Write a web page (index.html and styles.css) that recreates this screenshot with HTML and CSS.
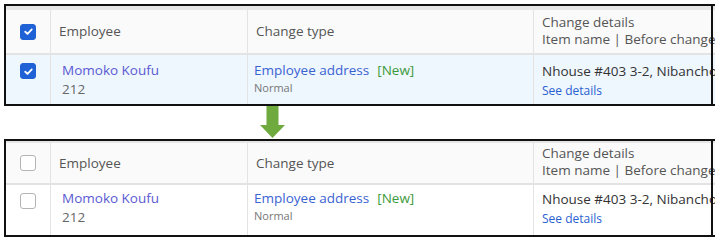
FILE: index.html
```html
<!DOCTYPE html>
<html>
<head>
<meta charset="utf-8">
<link rel="stylesheet" href="styles.css">
</head>
<body>
<div class="page">
  <div class="panel panel-top">
    <div class="grid">
      <div class="hcell ccb"><span class="cb checked"><svg viewBox="0 0 16 16" width="16" height="16"><path d="M4 8.3 L6.8 11 L12 5.4" fill="none" stroke="#fff" stroke-width="2.2" stroke-linecap="round" stroke-linejoin="round"/></svg></span></div>
      <div class="hcell">Employee</div>
      <div class="hcell">Change type</div>
      <div class="hcell two">Change details<br>Item name | Before change</div>
      <div class="sep"></div>
      <div class="rcell ccb sel"><span class="cb checked"><svg viewBox="0 0 16 16" width="16" height="16"><path d="M4 8.3 L6.8 11 L12 5.4" fill="none" stroke="#fff" stroke-width="2.2" stroke-linecap="round" stroke-linejoin="round"/></svg></span></div>
      <div class="rcell emp sel"><span class="name">Momoko Koufu</span><span class="num">212</span></div>
      <div class="rcell type sel"><span class="line"><span class="link">Employee address</span><span class="new">[New]</span></span><span class="small">Normal</span></div>
      <div class="rcell det sel"><span class="addr">Nhouse #403 3-2, Nibancho</span><span class="see">See details</span></div>
    </div>
  </div>
  <div class="arrow">
    <svg width="27" height="33" viewBox="0 0 27 33"><path d="M7.5 0 H19.5 V19 H26 L13.5 32 L1 19 H7.5 Z" fill="#6faa3f"/></svg>
  </div>
  <div class="panel panel-bottom">
    <div class="grid">
      <div class="hcell ccb"><span class="cb"></span></div>
      <div class="hcell">Employee</div>
      <div class="hcell">Change type</div>
      <div class="hcell two">Change details<br>Item name | Before change</div>
      <div class="sep"></div>
      <div class="rcell ccb"><span class="cb"></span></div>
      <div class="rcell emp"><span class="name">Momoko Koufu</span><span class="num">212</span></div>
      <div class="rcell type"><span class="line"><span class="link">Employee address</span><span class="new">[New]</span></span><span class="small">Normal</span></div>
      <div class="rcell det"><span class="addr">Nhouse #403 3-2, Nibancho</span><span class="see">See details</span></div>
    </div>
  </div>
</div>
</body>
</html>
```

FILE: styles.css
```css
* { box-sizing: border-box; }
html, body { margin: 0; padding: 0; background: #fff; }
body { font-family: "Open Sans", Lato, sans-serif; font-size: 13.5px; color: #555; }
.page { padding: 4px 0 0 4px; width: 715px; }
.panel {
  position: relative;
  border: 2px solid #111;
  border-right: none;
  width: 711px;
  overflow: hidden;
}
.panel::after {
  content: "";
  position: absolute;
  top: 0; bottom: 0;
  left: 705px;
  width: 2px;
  background: #111;
}
.grid {
  display: grid;
  grid-template-columns: 45px 197px 286px 1fr;
  white-space: nowrap;
}
.panel-top .grid { border-top: 4px solid #e6e6e6; }
.panel-bottom .grid { border-top: 2px solid #e6e6e6; }
.hcell {
  background: #fafafa;
  border-right: 1px solid #e3e3e3;
  padding: 0 8px;
  display: flex;
  align-items: center;
  height: 43px;
  line-height: 17px;
}
.panel-bottom .hcell { height: 40px; }
.hcell.two { display: block; padding-top: 4px; border-right: none; }
.panel-bottom .hcell.two { padding-top: 2px; }
.sep { grid-column: 1 / -1; height: 2px; background: #e3e3e3; }
.rcell {
  border-right: 1px solid #e3e3e3;
  padding: 6px 6px 6px;
  height: 49px;
  display: flex;
  flex-direction: column;
  line-height: 19px;
}
.panel-bottom .rcell { height: 50px; padding-top: 4px; }
.rcell.det { border-right: none; padding-left: 8px; }
.rcell.sel { background: #eef6fe; }
.ccb { justify-content: center; align-items: center; padding: 0; }
.rcell.ccb { justify-content: flex-start; padding-top: 8px; }
.panel-bottom .rcell.ccb { padding-top: 8px; }
.cb {
  width: 16px; height: 16px;
  border-radius: 3px;
  border: 1.5px solid #b5b5b5;
  background: #fff;
  display: flex;
  align-items: center;
  justify-content: center;
}
.cb.checked { background: #1e62d6; border-color: #1e62d6; }
.cb svg { width: 13px; height: 13px; }
.emp { padding-left: 11px; }
.name { color: #5a5ad2; }
.num { color: #666; }
.type { padding-left: 6px; }
.link { color: #3a63d2; }
.new { color: #3d9a3a; margin-left: 8px; }
.small { color: #777; font-size: 11px; line-height: 16px; }
.det .addr { color: #333; margin-top: 1px; }
.see { color: #2a60d0; font-size: 12px; line-height: 19px; }
.arrow { height: 33px; padding-left: 255px; display: flex; align-items: flex-start; }
.arrow svg { display: block; }
```
